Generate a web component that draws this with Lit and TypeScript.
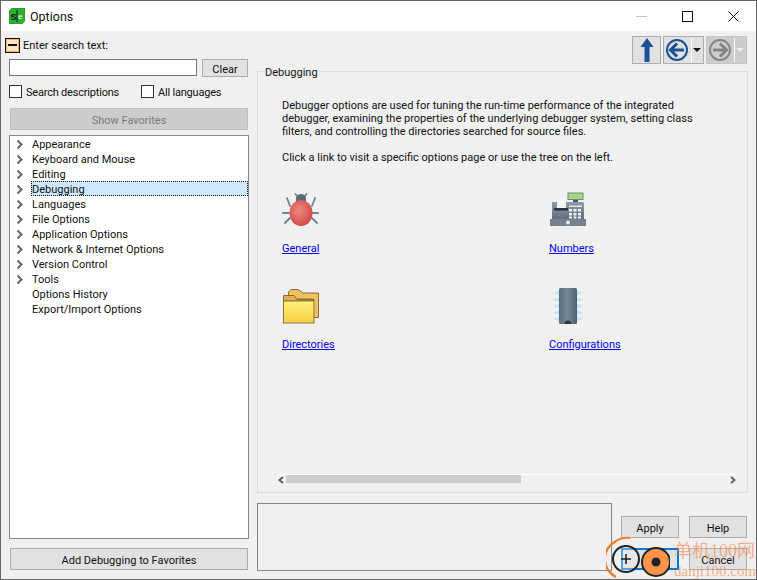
import { LitElement, html, css, svg } from "lit";
import { customElement } from "lit/decorators.js";

const TREE = [
  { label: "Appearance", kids: true },
  { label: "Keyboard and Mouse", kids: true },
  { label: "Editing", kids: true },
  { label: "Debugging", kids: true, selected: true },
  { label: "Languages", kids: true },
  { label: "File Options", kids: true },
  { label: "Application Options", kids: true },
  { label: "Network & Internet Options", kids: true },
  { label: "Version Control", kids: true },
  { label: "Tools", kids: true },
  { label: "Options History", kids: false },
  { label: "Export/Import Options", kids: false },
];

const bug = svg`<svg width="37" height="36" viewBox="0 0 37 36">
  <defs><radialGradient id="bugBody" cx="0.42" cy="0.4" r="0.7"><stop offset="0" stop-color="#ef8a80"/><stop offset="1" stop-color="#cf3f3d"/></radialGradient></defs>
  <g stroke="#76828c" stroke-width="1.8" fill="none" stroke-linecap="round">
    <path d="M8 15 L5 7 M11 22 L1 22 M8 27 L3 32 M30 15 L33 7 M26 22 L36 22 M30 27 L35 32 M15 5 L13.5 3 M23 5 L24.5 3"/>
  </g>
  <path d="M14 14 L14 7 Q15 3 19 3 Q23 3 24 7 L24 14 Z" fill="#5c6b78"/>
  <ellipse cx="19" cy="22" rx="11.5" ry="13" fill="url(#bugBody)"/>
</svg>`;

const register = svg`<svg width="38" height="36" viewBox="0 0 38 36">
  <defs><linearGradient id="regBody" x1="0" y1="0" x2="0" y2="1"><stop offset="0" stop-color="#8f9ba7"/><stop offset="1" stop-color="#5f6c79"/></linearGradient></defs>
  <rect x="3" y="11" width="32" height="18" rx="1" fill="url(#regBody)"/>
  <rect x="1" y="28" width="36" height="7" fill="#76838f"/>
  <circle cx="19" cy="31.5" r="2" fill="#e8eef2"/>
  <rect x="8" y="7" width="9" height="12" fill="#f2f4f6"/>
  <rect x="5" y="17" width="14" height="2.5" fill="#2a3138"/>
  <rect x="24" y="8" width="5" height="3" fill="#4a5560"/>
  <rect x="19" y="2" width="15" height="6.5" fill="#a3d77f" stroke="#6f8a78"/>
  <rect x="20" y="14.5" width="13" height="1.5" fill="#dfe5ea"/>
  <g fill="#f1f4f6">
    <rect x="20" y="18" width="3" height="2.5"/><rect x="24.5" y="18" width="3" height="2.5"/><rect x="29" y="18" width="3" height="2.5"/>
    <rect x="20" y="22" width="3" height="2.5"/><rect x="24.5" y="22" width="3" height="2.5"/><rect x="29" y="22" width="3" height="2.5"/>
    <rect x="20" y="25.5" width="3" height="2"/><rect x="24.5" y="25.5" width="3" height="2"/><rect x="29" y="25.5" width="3" height="2"/>
  </g>
</svg>`;

const folders = svg`<svg width="38" height="37" viewBox="0 0 38 37">
  <defs><linearGradient id="fold" x1="0" y1="0" x2="0" y2="1"><stop offset="0" stop-color="#fff27a"/><stop offset="1" stop-color="#f7cf45"/></linearGradient></defs>
  <path d="M6.5 5 L9 2.5 L16 2.5 L21 6 L36.5 6 L36.5 30.5 L31 30.5 L31 12 L6.5 12 Z" fill="#efc25e" stroke="#8a6d36"/>
  <path d="M1.5 10 L1.5 8.5 L12 8.5 L15 12.5 L32 12.5 L32 14 L1.5 14 Z" fill="#e4b04c" stroke="#8a6d36"/>
  <rect x="1.5" y="14" width="30.5" height="22" fill="url(#fold)" stroke="#8a7440"/>
</svg>`;

const chip = svg`<svg width="38" height="37" viewBox="0 0 38 37">
  <defs><linearGradient id="chipBody" x1="0" y1="0" x2="1" y2="0"><stop offset="0" stop-color="#5b6c7c"/><stop offset="0.5" stop-color="#76879a"/><stop offset="1" stop-color="#4f5f6e"/></linearGradient></defs>
  <g fill="#b9e4fb">
    <path d="M4 6 L11 3.5 V8.5 Z M4 12.5 L11 10 V15 Z M4 19 L11 16.5 V21.5 Z M4 25.5 L11 23 V28 Z M4 32 L11 29.5 V34.5 Z"/>
    <path d="M34 6 L27 3.5 V8.5 Z M34 12.5 L27 10 V15 Z M34 19 L27 16.5 V21.5 Z M34 25.5 L27 23 V28 Z M34 32 L27 29.5 V34.5 Z"/>
  </g>
  <rect x="10" y="1" width="18" height="36" rx="1.5" fill="url(#chipBody)"/>
  <path d="M15.5 37 A3.5 3.5 0 0 1 22.5 37 Z" fill="#2c3640"/>
</svg>`;

const LINKS = [
  { label: "General", icon: bug },
  { label: "Numbers", icon: register },
  { label: "Directories", icon: folders },
  { label: "Configurations", icon: chip },
];

const chevron = html`<svg class="chev" width="8" height="11" viewBox="0 0 8 11"><path d="M1.5 1.5 L5.5 5.5 L1.5 9.5" fill="none" stroke="#666" stroke-width="2"/></svg>`;

const circleArrow = (color: string, dir: number) => html`<svg width="24" height="24" viewBox="0 0 24 24">
  <g transform=${dir < 0 ? "" : "rotate(180 12 12)"}>
    <circle cx="12" cy="12" r="10" fill="none" stroke=${color} stroke-width="2"/>
    <path d="M12 5.5 L5.5 12 L12 18.5 M6 12 H19" fill="none" stroke=${color} stroke-width="3"/>
  </g>
</svg>`;

@customElement("app-root")
export class AppRoot extends LitElement {
  static styles = css`
    :host {
      display: block;
      width: 757px;
      height: 580px;
      font-family: Roboto, "Liberation Sans", sans-serif;
      font-size: 11px;
      color: #111;
    }
    * { box-sizing: border-box; }

    .window {
      position: relative;
      width: 757px;
      height: 580px;
      display: flex;
      flex-direction: column;
      background: #f0f0f0;
      border: 1px solid #666;
      overflow: hidden;
    }

    .titlebar {
      height: 30px;
      flex: none;
      background: #fff;
      display: flex;
      align-items: center;
      padding-left: 8px;
      gap: 5px;
      font-size: 12.5px;
    }
    .titlebar .name { flex: 1; }
    .win-btns { display: flex; }
    .win-btn { width: 46px; height: 30px; display: flex; align-items: center; justify-content: center; }

    .main { flex: 1; display: flex; min-height: 0; }

    .left {
      width: 256px;
      flex: none;
      display: flex;
      flex-direction: column;
      padding: 6px 4px 9px 8px;
    }
    .search-head { display: flex; align-items: center; gap: 3px; margin-left: -4px; height: 16px; }
    .collapse {
      width: 15px; height: 15px;
      border: 1px solid #111;
      outline: 1px solid #f3b25c;
      outline-offset: -2px;
      background: #fbe6c8;
      display: flex; align-items: center; justify-content: center;
    }
    .collapse i { width: 9px; height: 2px; background: #111; display: block; }

    .search-row { display: flex; gap: 5px; margin-top: 6px; }
    .search-row input {
      width: 188px; height: 17px;
      border: 1px solid #777;
      background: #fff;
      padding: 0;
    }
    .btn {
      display: flex; align-items: center; justify-content: center;
      background: #e1e1e1;
      border: 1px solid #adadad;
      color: #111;
      padding-top: 2px;
    }
    .clear { width: 46px; height: 18px; }

    .checks { display: flex; margin-top: 7px; height: 14px; letter-spacing: -0.2px; }
    .check { display: flex; align-items: center; gap: 4px; padding-top: 2px; }
    .check.first { width: 132px; }
    .box { width: 13px; height: 13px; border: 1px solid #333; background: #fff; margin-top: -2px; }

    .show-fav {
      height: 22px; margin: 10px 0 0 1px; width: 238px;
      background: #cccccc; border-color: #bfbfbf; color: #7a7a7a;
    }

    .tree {
      height: 404px; margin-top: 5px; width: 240px;
      background: #fff; border: 1px solid #828790;
      padding: 0;
    }
    .row { display: flex; align-items: center; height: 15px; position: relative; }
    .chev-slot { width: 21px; flex: none; padding: 1px 0 0 6px; display: flex; }
    .row .label { flex: 1; padding: 2px 0 0 1px; line-height: 13px; height: 15px; display: flex; align-items: center; }
    .row.selected .label { background: #cde8ff; border: 1px dotted #111; padding-left: 0; }

    .add-fav { height: 22px; width: 238px; margin: 9px 0 0 1px; }

    .right { flex: 1; display: flex; flex-direction: column; padding: 5px 8px 8px 0; min-width: 0; }
    .toolbar { display: flex; justify-content: flex-end; gap: 2px; height: 28px; flex: none; margin-right: 1px; }
    .tool {
      height: 28px;
      display: flex; align-items: center; justify-content: center;
      background: #e1e1e1; border: 1px solid #adadad;
    }
    .tool.up { width: 29px; padding: 0; }
    .tool.split { width: 41px; padding-left: 1px; justify-content: flex-start; }
    .tool.off { background: #cccccc; border-color: #c4c4c4; }
    .tool .sep { width: 1px; height: 24px; background: #fff; margin: 0 1px 0 2px; }
    .tri { width: 0; height: 0; border-left: 4px solid transparent; border-right: 4px solid transparent; border-top: 4px solid #111; }
    .off .tri { border-top-color: #eee; }

    .group {
      position: relative;
      height: 422px;
      margin: 7px 0 0 0;
      border: 1px solid #dcdcdc;
      display: flex;
      flex-direction: column;
      padding: 27px 10px 8px 19px;
    }
    .group-label {
      position: absolute; top: -6px; left: 6px;
      background: #f0f0f0; padding: 0 1px; line-height: 14px;
    }
    .intro { margin: 0 0 0 5px; line-height: 13px; width: 415px; }
    .intro + .intro { margin-top: 13px; }
    .links {
      display: grid;
      grid-template-columns: 267px 1fr;
      grid-auto-rows: 96px;
      margin: 27px 0 0 0;
    }
    .cell { display: flex; flex-direction: column; align-items: flex-start; margin-left: 5px; }
    .ico { height: 36px; }
    .ico svg { display: block; overflow: visible; }
    .cell a { margin-top: 15px; color: #0000ee; text-decoration: underline; line-height: 14px; }

    .hscroll { margin-top: auto; border-top: 1px solid #fff; height: 10px; display: flex; align-items: flex-start; }
    .thumb { width: 235px; height: 8px; background: #cdcdcd; margin-left: 1px; }
    .hscroll svg { flex: none; margin-top: 1px; }
    .hscroll .gap { flex: 1; }

    .bottom { display: flex; margin-top: 10px; height: 68px; }
    .status { width: 355px; border: 1px solid #828790; }
    .actions {
      margin: 13px 0 0 9px;
      display: grid;
      grid-template-columns: 58px 58px;
      grid-auto-rows: 22px;
      column-gap: 10px;
      row-gap: 10px;
    }
    .actions .ok { border: 2px solid #0078d7; }

    .mark { position: absolute; right: 0; bottom: 0; width: 150px; height: 58px; pointer-events: none; }
    .mark svg { position: absolute; left: 0; top: 0; }
    .mark .cn {
      position: absolute; left: 68px; top: 19px;
      font-family: "Liberation Serif", "Noto Sans CJK SC", serif; font-size: 18px; line-height: 22px;
      color: rgba(245, 130, 60, 0.6); white-space: nowrap;
    }
    .mark .en {
      position: absolute; left: 68px; top: 42px;
      font-family: "Liberation Serif", serif; font-size: 15px; line-height: 16px;
      color: rgba(245, 130, 60, 0.6); white-space: nowrap;
    }
  `;

  render() {
    return html`
      <div class="window">
        <div class="titlebar">
          <svg width="16" height="16" viewBox="0 0 16 16">
            <path d="M3 0 H16 V13 L13 16 H0 V3 Z" fill="#2fae2f" stroke="#1d7a1d" stroke-width="0.5"/>
            <path d="M8 2 V14" stroke="#111" stroke-width="1"/>
            <text x="1.5" y="11.5" font-size="9" font-family="Liberation Sans" font-weight="700" fill="#111">S</text>
            <text x="9" y="11" font-size="8" font-family="Liberation Sans" fill="#fff">e</text>
          </svg>
          <span class="name">Options</span>
          <div class="win-btns">
            <div class="win-btn"><svg width="11" height="11" viewBox="0 0 11 11"><path d="M0 5.5 H11" stroke="#c4c4c4"/></svg></div>
            <div class="win-btn"><svg width="11" height="11" viewBox="0 0 11 11"><rect x="0.5" y="0.5" width="10" height="10" fill="none" stroke="#111"/></svg></div>
            <div class="win-btn"><svg width="11" height="11" viewBox="0 0 11 11"><path d="M0.5 0.5 L10.5 10.5 M10.5 0.5 L0.5 10.5" stroke="#111"/></svg></div>
          </div>
        </div>

        <div class="main">
          <div class="left">
            <div class="search-head"><span class="collapse"><i></i></span><span>Enter search text:</span></div>
            <div class="search-row"><input type="text" /><div class="btn clear">Clear</div></div>
            <div class="checks">
              <label class="check first"><span class="box"></span>Search descriptions</label>
              <label class="check"><span class="box"></span>All languages</label>
            </div>
            <div class="btn show-fav">Show Favorites</div>
            <div class="tree">
              ${TREE.map(
                (t) => html`<div class="row ${t.selected ? "selected" : ""}">
                  <span class="chev-slot">${t.kids ? chevron : ""}</span>
                  <span class="label">${t.label}</span>
                </div>`
              )}
            </div>
            <div class="btn add-fav">Add Debugging to Favorites</div>
          </div>

          <div class="right">
            <div class="toolbar">
              <div class="tool up">
                <svg width="18" height="24" viewBox="0 0 18 24"><path d="M9 0 L15.5 9 H11.5 V24 H6.5 V9 H2.5 Z" fill="#1c4f94"/></svg>
              </div>
              <div class="tool split">${circleArrow("#1c4f94", -1)}<span class="sep"></span><span class="tri"></span></div>
              <div class="tool split off">${circleArrow("#858585", 1)}<span class="sep"></span><span class="tri"></span></div>
            </div>

            <div class="group">
              <span class="group-label">Debugging</span>
              <p class="intro">Debugger options are used for tuning the run-time performance of the integrated debugger, examining the properties of the underlying debugger system, setting class filters, and controlling the directories searched for source files.</p>
              <p class="intro">Click a link to visit a specific options page or use the tree on the left.</p>
              <div class="links">
                ${LINKS.map((l) => html`<div class="cell"><div class="ico">${l.icon}</div><a>${l.label}</a></div>`)}
              </div>
              <div class="hscroll">
                <svg width="8" height="8" viewBox="0 0 8 8"><path d="M6 1 L2.5 4 L6 7" fill="none" stroke="#606060" stroke-width="2"/></svg>
                <div class="thumb"></div>
                <span class="gap"></span>
                <svg width="8" height="8" viewBox="0 0 8 8"><path d="M2 1 L5.5 4 L2 7" fill="none" stroke="#606060" stroke-width="2"/></svg>
              </div>
            </div>

            <div class="bottom">
              <div class="status"></div>
              <div class="actions">
                <div class="btn">Apply</div>
                <div class="btn">Help</div>
                <div class="btn ok"></div>
                <div class="btn">Cancel</div>
              </div>
            </div>
          </div>
        </div>

        <div class="mark">
          <svg width="64" height="58" viewBox="0 0 64 58">
            <path d="M10 20 A20 20 0 0 0 10 56" fill="none" stroke="#f08030" stroke-width="2.5"/>
            <path d="M10 20 A20 20 0 0 1 24 17" fill="none" stroke="#f08030" stroke-width="2"/>
            <circle cx="20" cy="38" r="13" fill="#f0f0f0" fill-opacity="0.35" stroke="#222" stroke-width="2"/>
            <path d="M15 38 H25 M20 33 V43" stroke="#222" stroke-width="1.6"/>
            <circle cx="50" cy="41" r="14" fill="#ff9450" stroke="#222" stroke-width="2"/>
            <circle cx="50" cy="41" r="4.5" fill="#222"/>
          </svg>
          <span class="cn">单机100网</span>
          <span class="en">danji100.com</span>
        </div>
      </div>
    `;
  }
}
